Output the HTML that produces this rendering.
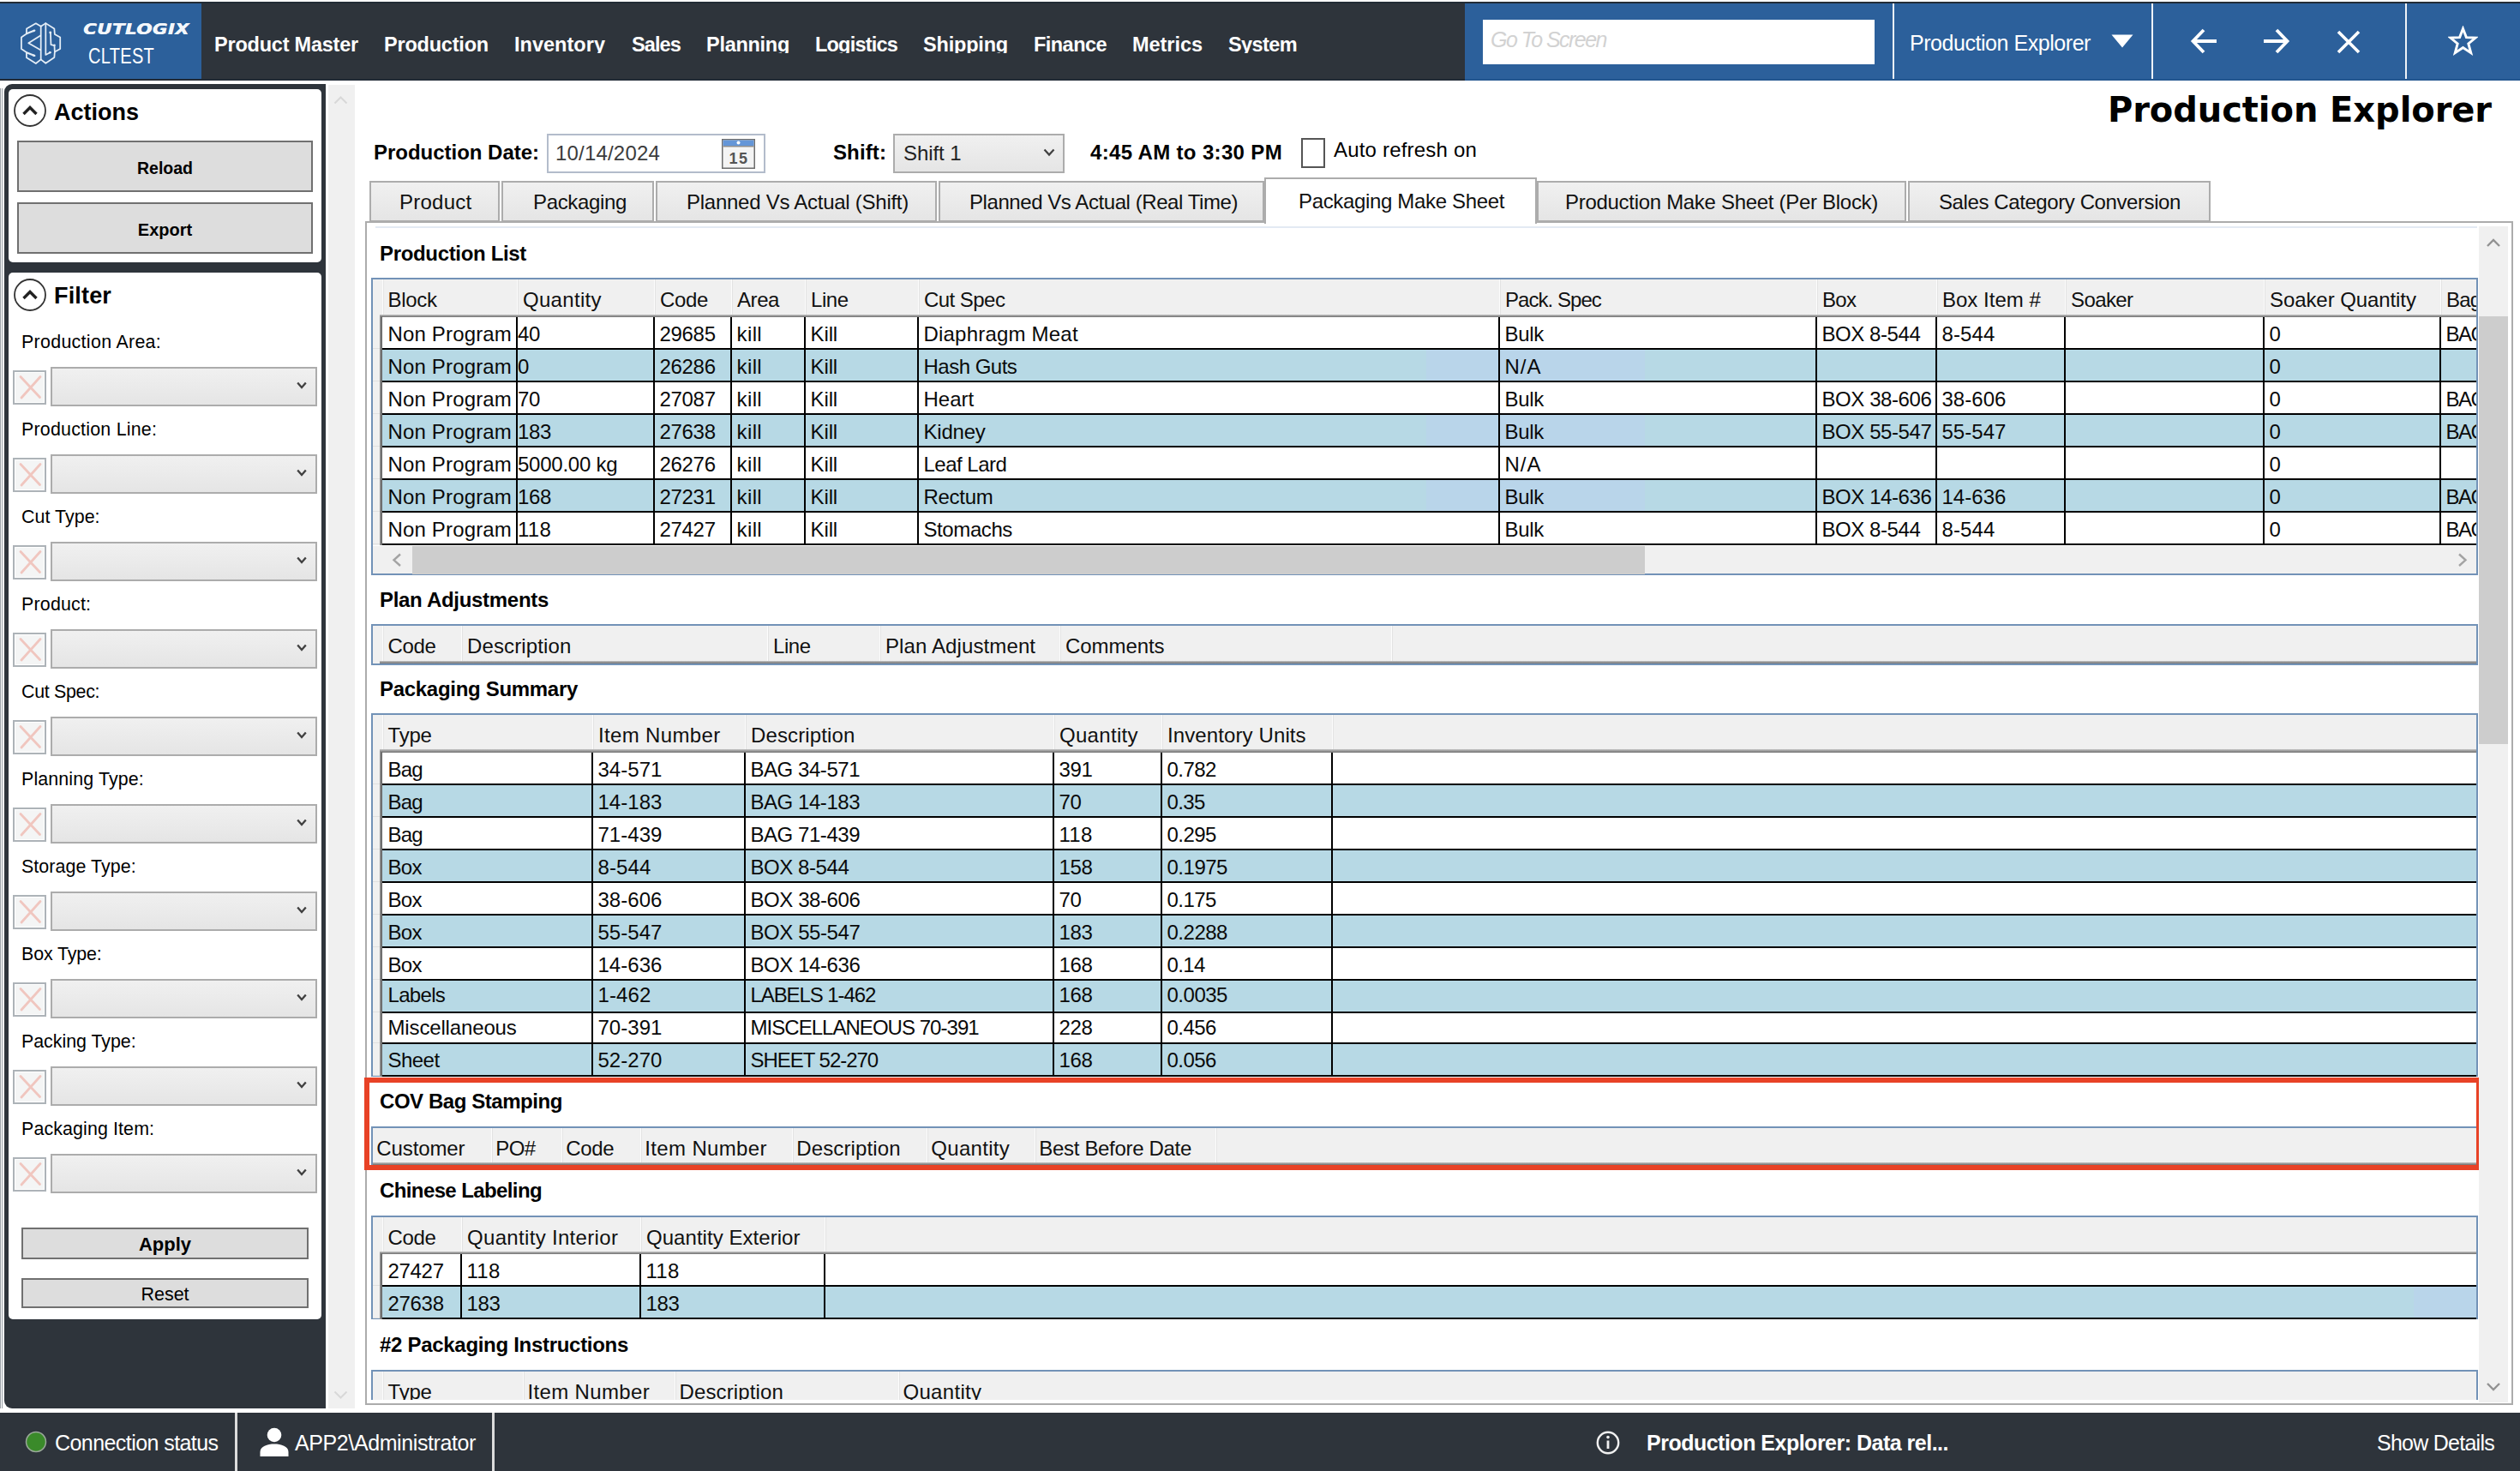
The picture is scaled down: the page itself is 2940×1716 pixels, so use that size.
<!DOCTYPE html>
<html lang="en"><head><meta charset="utf-8"><title>Production Explorer</title>
<style>
html,body{margin:0;padding:0}
body{width:2940px;height:1716px;position:relative;overflow:hidden;background:#fff;font-family:'Liberation Sans',sans-serif;color:#000}
div,svg{position:absolute}
.t{white-space:nowrap}
</style></head>
<body>
<div style="left:0px;top:2px;width:2940px;height:92px;background:#2e343b;border-top:2px solid #232c36;box-sizing:border-box"></div>
<div style="left:0px;top:4px;width:235px;height:88px;background:#2c609b"></div>
<div style="left:1709px;top:4px;width:1231px;height:88px;background:#2c609b"></div>
<div style="left:0px;top:92px;width:2940px;height:2px;background:#222b36"></div>
<div style="left:1709px;top:92px;width:1231px;height:2px;background:#23568f"></div>
<svg style="left:10px;top:14px" width="80" height="72" viewBox="0 0 1634 1471" fill="none" stroke="#e4edf6" stroke-width="36" stroke-linejoin="round" stroke-linecap="round">
<path d="M650 272 L770 342 L885 268 L1090 400 L1100 530 L1230 602 L1230 880 L1100 952 L1090 1082 L885 1222 L770 1132 L650 1226 L430 1090 L425 960 L305 880 L305 602 L425 522 L430 400 Z"/>
<path d="M770 342 V1132 M885 268 V1020 L1000 962"/>
<path d="M760 562 L475 742 L760 902"/>
<path d="M440 512 L620 440 M440 968 L620 1042" stroke-width="44"/>
<path d="M1000 492 L1010 780 L1092 800 L1100 950"/>
<circle cx="600" cy="450" r="26" fill="#e4edf6" stroke="none"/><circle cx="600" cy="1036" r="26" fill="#e4edf6" stroke="none"/><circle cx="995" cy="492" r="30" fill="#e4edf6" stroke="none"/><circle cx="1092" cy="790" r="26" fill="#e4edf6" stroke="none"/><circle cx="985" cy="965" r="26" fill="#e4edf6" stroke="none"/>
</svg>
<div class="t" style="left:97px;top:23px;font-size:17px;line-height:23px;letter-spacing:0.300px;font-family:'DejaVu Sans','Liberation Sans',sans-serif;font-weight:700;font-style:italic;color:#f4f7fb;transform:scaleX(1.26);transform-origin:left;text-shadow:0.4px 0 0 #f4f7fb;">CUTLOGIX</div>
<div class="t" style="left:102.5px;top:50px;font-size:25px;line-height:31px;letter-spacing:0.400px;color:#fff;transform:scaleX(0.80);transform-origin:left;">CLTEST</div>
<div style="left:240px;top:30px;width:1300px;height:32px;overflow:hidden">
<div class="t" style="left:10px;top:8px;font-size:23.5px;line-height:29px;font-weight:700;color:#fff;letter-spacing:-0.219px">Product Master</div>
<div class="t" style="left:208px;top:8px;font-size:23.5px;line-height:29px;font-weight:700;color:#fff;letter-spacing:-0.202px">Production</div>
<div class="t" style="left:360px;top:8px;font-size:23.5px;line-height:29px;font-weight:700;color:#fff;letter-spacing:0.025px">Inventory</div>
<div class="t" style="left:497px;top:8px;font-size:23.5px;line-height:29px;font-weight:700;color:#fff;letter-spacing:-0.883px">Sales</div>
<div class="t" style="left:584px;top:8px;font-size:23.5px;line-height:29px;font-weight:700;color:#fff;letter-spacing:-0.278px">Planning</div>
<div class="t" style="left:711px;top:8px;font-size:23.5px;line-height:29px;font-weight:700;color:#fff;letter-spacing:-0.795px">Logistics</div>
<div class="t" style="left:837px;top:8px;font-size:23.5px;line-height:29px;font-weight:700;color:#fff;letter-spacing:-0.189px">Shipping</div>
<div class="t" style="left:966px;top:8px;font-size:23.5px;line-height:29px;font-weight:700;color:#fff;letter-spacing:-0.543px">Finance</div>
<div class="t" style="left:1081px;top:8px;font-size:23.5px;line-height:29px;font-weight:700;color:#fff;letter-spacing:-0.041px">Metrics</div>
<div class="t" style="left:1193px;top:8px;font-size:23.5px;line-height:29px;font-weight:700;color:#fff;letter-spacing:-0.601px">System</div>
</div>
<div style="left:1730px;top:23px;width:457px;height:52px;background:#fff"></div>
<div class="t" style="left:1739px;top:31px;font-size:25px;line-height:31px;letter-spacing:-1.528px;font-style:italic;color:#d2d2d2;">Go To Screen</div>
<div style="left:2208px;top:4px;width:2px;height:88px;background:#eef2f7"></div>
<div style="left:2510px;top:4px;width:2px;height:88px;background:#eef2f7"></div>
<div style="left:2806px;top:4px;width:2px;height:88px;background:#eef2f7"></div>
<div class="t" style="left:2228px;top:35px;font-size:25px;line-height:31px;letter-spacing:-0.451px;color:#fff;">Production Explorer</div>
<svg style="left:2463px;top:40px" width="26" height="16" viewBox="0 0 26 16"><path d="M0.5 0.5 L25.5 0.5 L13 15.5 Z" fill="#fff"/></svg>
<svg style="left:2555px;top:32px" width="34" height="32" viewBox="0 0 34 32" fill="none" stroke="#fff" stroke-width="3.8"><path d="M31 16 H4 M16 3 L3.5 16 L16 29"/></svg>
<svg style="left:2638px;top:32px" width="34" height="32" viewBox="0 0 34 32" fill="none" stroke="#fff" stroke-width="3.8"><path d="M3 16 H30 M18 3 L30.5 16 L18 29"/></svg>
<svg style="left:2725px;top:34px" width="30" height="30" viewBox="0 0 30 30" fill="none" stroke="#fff" stroke-width="3.6"><path d="M3 3 L27 27 M27 3 L3 27"/></svg>
<svg style="left:2855.5px;top:30px" width="35" height="35" viewBox="0 0 36 36" fill="none" stroke="#fff" stroke-width="3" stroke-linejoin="miter"><path d="M18 3.5 L22 14 L33 14.5 L24.5 21.5 L27.5 32.5 L18 26.2 L8.5 32.5 L11.5 21.5 L3 14.5 L14 14 Z"/></svg>
<div style="left:0px;top:103px;width:1px;height:1540px;background:#9aa0a6"></div>
<div style="left:2px;top:103px;width:1px;height:1540px;background:#9aa0a6"></div>
<div style="left:5px;top:98px;width:375px;height:1545px;background:#2e343b;border-radius:9px 0 0 9px"></div>
<div style="left:10px;top:104px;width:365px;height:202px;background:#fff;border-radius:5px"></div>
<div style="left:10px;top:318px;width:365px;height:1221px;background:#fff;border-radius:5px"></div>
<svg style="left:15.299999999999997px;top:109px" width="40" height="40" viewBox="0 0 40 40" fill="none"><circle cx="20" cy="20" r="18" stroke="#333" stroke-width="1.8"/><path d="M12.5 24 L20 16.5 L27.5 24" stroke="#222" stroke-width="3.4"/></svg>
<svg style="left:15.299999999999997px;top:323.5px" width="40" height="40" viewBox="0 0 40 40" fill="none"><circle cx="20" cy="20" r="18" stroke="#333" stroke-width="1.8"/><path d="M12.5 24 L20 16.5 L27.5 24" stroke="#222" stroke-width="3.4"/></svg>
<div class="t" style="left:63px;top:115px;font-size:27px;line-height:33px;font-weight:700;">Actions</div>
<div class="t" style="left:63px;top:329px;font-size:27px;line-height:33px;letter-spacing:0.165px;font-weight:700;">Filter</div>
<div style="left:20px;top:164px;width:345px;height:60px;background:#ddd;border:2px solid #707070;box-sizing:border-box"></div>
<div style="left:20px;top:236px;width:345px;height:60px;background:#ddd;border:2px solid #707070;box-sizing:border-box"></div>
<div class="t" style="left:-307.5px;width:1000px;text-align:center;top:184px;font-size:19.5px;line-height:25px;font-weight:700;">Reload</div>
<div class="t" style="left:-307.5px;width:1000px;text-align:center;top:255px;font-size:20px;line-height:26px;font-weight:700;">Export</div>
<div class="t" style="left:25px;top:386px;font-size:21.4px;line-height:27px;letter-spacing:0.307px;">Production Area:</div>
<div style="left:15px;top:432px;width:39px;height:40px;background:#f4f5f5;border:2px solid #adb3b8;box-sizing:border-box;box-shadow:inset 0 0 0 1px #fff"></div>
<svg style="left:15px;top:432px" width="39" height="40" viewBox="0 0 39 40" fill="none" stroke="#f0c6bf" stroke-width="2.8" stroke-linecap="round"><path d="M9 7.5 L31.5 31.5 M32 7.5 L10 32"/></svg>
<div style="left:59px;top:428px;width:311px;height:46px;background:linear-gradient(#f0f0f0,#e5e5e5);border:2px solid #acacac;box-sizing:border-box"></div>
<svg style="left:344px;top:444px" width="16" height="12" viewBox="0 0 16 12" fill="none" stroke="#404040" stroke-width="2.3"><path d="M3.2 2.5 L8 8 L12.8 2.5"/></svg>
<div class="t" style="left:25px;top:488px;font-size:21.4px;line-height:27px;letter-spacing:0.220px;">Production Line:</div>
<div style="left:15px;top:534px;width:39px;height:40px;background:#f4f5f5;border:2px solid #adb3b8;box-sizing:border-box;box-shadow:inset 0 0 0 1px #fff"></div>
<svg style="left:15px;top:534px" width="39" height="40" viewBox="0 0 39 40" fill="none" stroke="#f0c6bf" stroke-width="2.8" stroke-linecap="round"><path d="M9 7.5 L31.5 31.5 M32 7.5 L10 32"/></svg>
<div style="left:59px;top:530px;width:311px;height:46px;background:linear-gradient(#f0f0f0,#e5e5e5);border:2px solid #acacac;box-sizing:border-box"></div>
<svg style="left:344px;top:546px" width="16" height="12" viewBox="0 0 16 12" fill="none" stroke="#404040" stroke-width="2.3"><path d="M3.2 2.5 L8 8 L12.8 2.5"/></svg>
<div class="t" style="left:25px;top:590px;font-size:21.4px;line-height:27px;letter-spacing:0.044px;">Cut Type:</div>
<div style="left:15px;top:636px;width:39px;height:40px;background:#f4f5f5;border:2px solid #adb3b8;box-sizing:border-box;box-shadow:inset 0 0 0 1px #fff"></div>
<svg style="left:15px;top:636px" width="39" height="40" viewBox="0 0 39 40" fill="none" stroke="#f0c6bf" stroke-width="2.8" stroke-linecap="round"><path d="M9 7.5 L31.5 31.5 M32 7.5 L10 32"/></svg>
<div style="left:59px;top:632px;width:311px;height:46px;background:linear-gradient(#f0f0f0,#e5e5e5);border:2px solid #acacac;box-sizing:border-box"></div>
<svg style="left:344px;top:648px" width="16" height="12" viewBox="0 0 16 12" fill="none" stroke="#404040" stroke-width="2.3"><path d="M3.2 2.5 L8 8 L12.8 2.5"/></svg>
<div class="t" style="left:25px;top:692px;font-size:21.4px;line-height:27px;letter-spacing:0.196px;">Product:</div>
<div style="left:15px;top:738px;width:39px;height:40px;background:#f4f5f5;border:2px solid #adb3b8;box-sizing:border-box;box-shadow:inset 0 0 0 1px #fff"></div>
<svg style="left:15px;top:738px" width="39" height="40" viewBox="0 0 39 40" fill="none" stroke="#f0c6bf" stroke-width="2.8" stroke-linecap="round"><path d="M9 7.5 L31.5 31.5 M32 7.5 L10 32"/></svg>
<div style="left:59px;top:734px;width:311px;height:46px;background:linear-gradient(#f0f0f0,#e5e5e5);border:2px solid #acacac;box-sizing:border-box"></div>
<svg style="left:344px;top:750px" width="16" height="12" viewBox="0 0 16 12" fill="none" stroke="#404040" stroke-width="2.3"><path d="M3.2 2.5 L8 8 L12.8 2.5"/></svg>
<div class="t" style="left:25px;top:794px;font-size:21.4px;line-height:27px;letter-spacing:-0.296px;">Cut Spec:</div>
<div style="left:15px;top:840px;width:39px;height:40px;background:#f4f5f5;border:2px solid #adb3b8;box-sizing:border-box;box-shadow:inset 0 0 0 1px #fff"></div>
<svg style="left:15px;top:840px" width="39" height="40" viewBox="0 0 39 40" fill="none" stroke="#f0c6bf" stroke-width="2.8" stroke-linecap="round"><path d="M9 7.5 L31.5 31.5 M32 7.5 L10 32"/></svg>
<div style="left:59px;top:836px;width:311px;height:46px;background:linear-gradient(#f0f0f0,#e5e5e5);border:2px solid #acacac;box-sizing:border-box"></div>
<svg style="left:344px;top:852px" width="16" height="12" viewBox="0 0 16 12" fill="none" stroke="#404040" stroke-width="2.3"><path d="M3.2 2.5 L8 8 L12.8 2.5"/></svg>
<div class="t" style="left:25px;top:896px;font-size:21.4px;line-height:27px;letter-spacing:0.121px;">Planning Type:</div>
<div style="left:15px;top:942px;width:39px;height:40px;background:#f4f5f5;border:2px solid #adb3b8;box-sizing:border-box;box-shadow:inset 0 0 0 1px #fff"></div>
<svg style="left:15px;top:942px" width="39" height="40" viewBox="0 0 39 40" fill="none" stroke="#f0c6bf" stroke-width="2.8" stroke-linecap="round"><path d="M9 7.5 L31.5 31.5 M32 7.5 L10 32"/></svg>
<div style="left:59px;top:938px;width:311px;height:46px;background:linear-gradient(#f0f0f0,#e5e5e5);border:2px solid #acacac;box-sizing:border-box"></div>
<svg style="left:344px;top:954px" width="16" height="12" viewBox="0 0 16 12" fill="none" stroke="#404040" stroke-width="2.3"><path d="M3.2 2.5 L8 8 L12.8 2.5"/></svg>
<div class="t" style="left:25px;top:998px;font-size:21.4px;line-height:27px;letter-spacing:0.068px;">Storage Type:</div>
<div style="left:15px;top:1044px;width:39px;height:40px;background:#f4f5f5;border:2px solid #adb3b8;box-sizing:border-box;box-shadow:inset 0 0 0 1px #fff"></div>
<svg style="left:15px;top:1044px" width="39" height="40" viewBox="0 0 39 40" fill="none" stroke="#f0c6bf" stroke-width="2.8" stroke-linecap="round"><path d="M9 7.5 L31.5 31.5 M32 7.5 L10 32"/></svg>
<div style="left:59px;top:1040px;width:311px;height:46px;background:linear-gradient(#f0f0f0,#e5e5e5);border:2px solid #acacac;box-sizing:border-box"></div>
<svg style="left:344px;top:1056px" width="16" height="12" viewBox="0 0 16 12" fill="none" stroke="#404040" stroke-width="2.3"><path d="M3.2 2.5 L8 8 L12.8 2.5"/></svg>
<div class="t" style="left:25px;top:1100px;font-size:21.4px;line-height:27px;letter-spacing:-0.117px;">Box Type:</div>
<div style="left:15px;top:1146px;width:39px;height:40px;background:#f4f5f5;border:2px solid #adb3b8;box-sizing:border-box;box-shadow:inset 0 0 0 1px #fff"></div>
<svg style="left:15px;top:1146px" width="39" height="40" viewBox="0 0 39 40" fill="none" stroke="#f0c6bf" stroke-width="2.8" stroke-linecap="round"><path d="M9 7.5 L31.5 31.5 M32 7.5 L10 32"/></svg>
<div style="left:59px;top:1142px;width:311px;height:46px;background:linear-gradient(#f0f0f0,#e5e5e5);border:2px solid #acacac;box-sizing:border-box"></div>
<svg style="left:344px;top:1158px" width="16" height="12" viewBox="0 0 16 12" fill="none" stroke="#404040" stroke-width="2.3"><path d="M3.2 2.5 L8 8 L12.8 2.5"/></svg>
<div class="t" style="left:25px;top:1202px;font-size:21.4px;line-height:27px;letter-spacing:-0.024px;">Packing Type:</div>
<div style="left:15px;top:1248px;width:39px;height:40px;background:#f4f5f5;border:2px solid #adb3b8;box-sizing:border-box;box-shadow:inset 0 0 0 1px #fff"></div>
<svg style="left:15px;top:1248px" width="39" height="40" viewBox="0 0 39 40" fill="none" stroke="#f0c6bf" stroke-width="2.8" stroke-linecap="round"><path d="M9 7.5 L31.5 31.5 M32 7.5 L10 32"/></svg>
<div style="left:59px;top:1244px;width:311px;height:46px;background:linear-gradient(#f0f0f0,#e5e5e5);border:2px solid #acacac;box-sizing:border-box"></div>
<svg style="left:344px;top:1260px" width="16" height="12" viewBox="0 0 16 12" fill="none" stroke="#404040" stroke-width="2.3"><path d="M3.2 2.5 L8 8 L12.8 2.5"/></svg>
<div class="t" style="left:25px;top:1304px;font-size:21.4px;line-height:27px;letter-spacing:0.116px;">Packaging Item:</div>
<div style="left:15px;top:1350px;width:39px;height:40px;background:#f4f5f5;border:2px solid #adb3b8;box-sizing:border-box;box-shadow:inset 0 0 0 1px #fff"></div>
<svg style="left:15px;top:1350px" width="39" height="40" viewBox="0 0 39 40" fill="none" stroke="#f0c6bf" stroke-width="2.8" stroke-linecap="round"><path d="M9 7.5 L31.5 31.5 M32 7.5 L10 32"/></svg>
<div style="left:59px;top:1346px;width:311px;height:46px;background:linear-gradient(#f0f0f0,#e5e5e5);border:2px solid #acacac;box-sizing:border-box"></div>
<svg style="left:344px;top:1362px" width="16" height="12" viewBox="0 0 16 12" fill="none" stroke="#404040" stroke-width="2.3"><path d="M3.2 2.5 L8 8 L12.8 2.5"/></svg>
<div style="left:25px;top:1432px;width:335px;height:37px;background:#ddd;border:2px solid #707070;box-sizing:border-box"></div>
<div style="left:25px;top:1491px;width:335px;height:35px;background:#ddd;border:2px solid #707070;box-sizing:border-box"></div>
<div class="t" style="left:-307.5px;width:1000px;text-align:center;top:1438px;font-size:22px;line-height:28px;font-weight:700;">Apply</div>
<div class="t" style="left:-307.5px;width:1000px;text-align:center;top:1497px;font-size:21.5px;line-height:27px;">Reset</div>
<div style="left:383px;top:99px;width:31px;height:1544px;background:#f0f0f0"></div>
<svg style="left:389px;top:111px" width="17" height="11" viewBox="0 0 17 11" fill="none" stroke="#d8d8d8" stroke-width="2"><path d="M1.5 9.5 L8.5 2.5 L15.5 9.5"/></svg>
<svg style="left:389px;top:1622px" width="17" height="11" viewBox="0 0 17 11" fill="none" stroke="#d8d8d8" stroke-width="2"><path d="M1.5 1.5 L8.5 8.5 L15.5 1.5"/></svg>
<div class="t" style="left:2459px;top:105px;font-size:40px;line-height:46px;letter-spacing:-0.085px;font-family:'DejaVu Sans','Liberation Sans',sans-serif;font-weight:700;">Production Explorer</div>
<div class="t" style="left:436px;top:163px;font-size:24px;line-height:30px;letter-spacing:-0.021px;font-weight:700;">Production Date:</div>
<div style="left:638px;top:156px;width:255px;height:46px;background:#fff;border:2px solid #b3bccb;box-sizing:border-box"></div>
<div class="t" style="left:648px;top:164px;font-size:24px;line-height:30px;letter-spacing:0.188px;color:#3c3c3c;">10/14/2024</div>
<svg style="left:842px;top:162px" width="39" height="35" viewBox="0 0 39 35"><rect x="0.75" y="0.75" width="37.5" height="33.5" fill="#f4f4f4" stroke="#6d6d6d" stroke-width="1.5"/><rect x="1.5" y="1.5" width="36" height="6.5" fill="#6496d8"/><circle cx="19.5" cy="4.5" r="2" fill="#fff"/><rect x="1.5" y="8" width="36" height="1.5" fill="#8f8f8f"/><text x="20" y="29" text-anchor="middle" font-family="Liberation Sans, sans-serif" font-weight="700" font-size="18" fill="#555" letter-spacing="1.5">15</text></svg>
<div class="t" style="left:972px;top:163px;font-size:24px;line-height:30px;letter-spacing:0.114px;font-weight:700;">Shift:</div>
<div style="left:1042px;top:156px;width:200px;height:46px;background:linear-gradient(#f0f0f0,#e5e5e5);border:2px solid #acacac;box-sizing:border-box"></div>
<div class="t" style="left:1054px;top:164px;font-size:24px;line-height:30px;letter-spacing:-0.077px;color:#222;">Shift 1</div>
<svg style="left:1216px;top:172px" width="16" height="12" viewBox="0 0 16 12" fill="none" stroke="#404040" stroke-width="2.2"><path d="M2.5 2.5 L8 8.5 L13.5 2.5"/></svg>
<div class="t" style="left:1272px;top:163px;font-size:24px;line-height:30px;letter-spacing:0.342px;font-weight:700;">4:45 AM to 3:30 PM</div>
<div style="left:1518px;top:161px;width:28px;height:35px;background:#fff;border:2px solid #555;box-sizing:border-box"></div>
<div class="t" style="left:1556px;top:160px;font-size:24px;line-height:30px;letter-spacing:0.193px;">Auto refresh on</div>
<div style="left:426px;top:258px;width:2505.5px;height:1381px;background:#fff;border:2px solid #acacac;box-sizing:border-box"></div>
<div style="left:431px;top:211px;width:152px;height:48px;background:linear-gradient(#f0f0f0,#e5e5e5);border:2px solid #acacac;box-sizing:border-box"></div>
<div style="left:585px;top:211px;width:178px;height:48px;background:linear-gradient(#f0f0f0,#e5e5e5);border:2px solid #acacac;box-sizing:border-box"></div>
<div style="left:765px;top:211px;width:328px;height:48px;background:linear-gradient(#f0f0f0,#e5e5e5);border:2px solid #acacac;box-sizing:border-box"></div>
<div style="left:1095px;top:211px;width:380px;height:48px;background:linear-gradient(#f0f0f0,#e5e5e5);border:2px solid #acacac;box-sizing:border-box"></div>
<div style="left:1475px;top:207px;width:318px;height:54px;background:#fff;border:2px solid #acacac;border-bottom:none;box-sizing:border-box"></div>
<div style="left:1793px;top:211px;width:431px;height:48px;background:linear-gradient(#f0f0f0,#e5e5e5);border:2px solid #acacac;box-sizing:border-box"></div>
<div style="left:2226px;top:211px;width:353px;height:48px;background:linear-gradient(#f0f0f0,#e5e5e5);border:2px solid #acacac;box-sizing:border-box"></div>
<div class="t" style="left:466px;top:221px;font-size:24px;line-height:30px;letter-spacing:0.255px;color:#111;">Product</div>
<div class="t" style="left:622px;top:221px;font-size:24px;line-height:30px;letter-spacing:-0.342px;color:#111;">Packaging</div>
<div class="t" style="left:801px;top:221px;font-size:24px;line-height:30px;letter-spacing:-0.259px;color:#111;">Planned Vs Actual (Shift)</div>
<div class="t" style="left:1131px;top:221px;font-size:24px;line-height:30px;letter-spacing:-0.431px;color:#111;">Planned Vs Actual (Real Time)</div>
<div class="t" style="left:1515px;top:220px;font-size:24px;line-height:30px;letter-spacing:-0.341px;color:#111;">Packaging Make Sheet</div>
<div class="t" style="left:1826px;top:221px;font-size:24px;line-height:30px;letter-spacing:-0.298px;color:#111;">Production Make Sheet (Per Block)</div>
<div class="t" style="left:2262px;top:221px;font-size:24px;line-height:30px;letter-spacing:-0.406px;color:#111;">Sales Category Conversion</div>
<div style="left:438px;top:264px;width:2452px;height:2px;background:#e3eaf3"></div>
<div class="t" style="left:443px;top:281px;font-size:24px;line-height:30px;letter-spacing:-0.333px;font-weight:700;">Production List</div>
<div style="left:433px;top:324px;width:2458px;height:347px;overflow:hidden">
<div style="left:0px;top:0px;width:2458px;height:347px;border:2px solid #7292b7;box-sizing:border-box;background:#f0f0f0"></div>
<div style="left:13px;top:2px;width:1px;height:41px;background:#fbfbfb"></div>
<div style="left:14px;top:2px;width:1px;height:41px;background:#e6e6e6"></div>
<div style="left:170px;top:2px;width:1px;height:41px;background:#fcfcfc"></div>
<div style="left:171px;top:2px;width:1px;height:41px;background:#e3e3e3"></div>
<div style="left:330px;top:2px;width:1px;height:41px;background:#fcfcfc"></div>
<div style="left:331px;top:2px;width:1px;height:41px;background:#e3e3e3"></div>
<div style="left:420px;top:2px;width:1px;height:41px;background:#fcfcfc"></div>
<div style="left:421px;top:2px;width:1px;height:41px;background:#e3e3e3"></div>
<div style="left:506px;top:2px;width:1px;height:41px;background:#fcfcfc"></div>
<div style="left:507px;top:2px;width:1px;height:41px;background:#e3e3e3"></div>
<div style="left:638px;top:2px;width:1px;height:41px;background:#fcfcfc"></div>
<div style="left:639px;top:2px;width:1px;height:41px;background:#e3e3e3"></div>
<div style="left:1316px;top:2px;width:1px;height:41px;background:#fcfcfc"></div>
<div style="left:1317px;top:2px;width:1px;height:41px;background:#e3e3e3"></div>
<div style="left:1686px;top:2px;width:1px;height:41px;background:#fcfcfc"></div>
<div style="left:1687px;top:2px;width:1px;height:41px;background:#e3e3e3"></div>
<div style="left:1826px;top:2px;width:1px;height:41px;background:#fcfcfc"></div>
<div style="left:1827px;top:2px;width:1px;height:41px;background:#e3e3e3"></div>
<div style="left:1976px;top:2px;width:1px;height:41px;background:#fcfcfc"></div>
<div style="left:1977px;top:2px;width:1px;height:41px;background:#e3e3e3"></div>
<div style="left:2208px;top:2px;width:1px;height:41px;background:#fcfcfc"></div>
<div style="left:2209px;top:2px;width:1px;height:41px;background:#e3e3e3"></div>
<div style="left:2414px;top:2px;width:1px;height:41px;background:#fcfcfc"></div>
<div style="left:2415px;top:2px;width:1px;height:41px;background:#e3e3e3"></div>
<div style="left:10px;top:43px;width:2446px;height:3px;background:linear-gradient(#c4c4c4,#6e6e6e)"></div>
<div style="left:13px;top:46px;width:2443px;height:36px;background:#fff"></div>
<div style="left:13px;top:82px;width:2443px;height:2px;background:#000"></div>
<div style="left:2px;top:82px;width:8px;height:1px;background:#e0e0e0"></div>
<div style="left:13px;top:84px;width:2443px;height:36px;background:#b7d9e5"></div>
<div style="left:1231px;top:84px;width:255px;height:36px;background:#b9d5ea"></div>
<div style="left:13px;top:120px;width:2443px;height:2px;background:#000"></div>
<div style="left:2px;top:120px;width:8px;height:1px;background:#e0e0e0"></div>
<div style="left:13px;top:122px;width:2443px;height:36px;background:#fff"></div>
<div style="left:13px;top:158px;width:2443px;height:2px;background:#000"></div>
<div style="left:2px;top:158px;width:8px;height:1px;background:#e0e0e0"></div>
<div style="left:13px;top:160px;width:2443px;height:36px;background:#b7d9e5"></div>
<div style="left:1231px;top:160px;width:255px;height:36px;background:#b9d5ea"></div>
<div style="left:13px;top:196px;width:2443px;height:2px;background:#000"></div>
<div style="left:2px;top:196px;width:8px;height:1px;background:#e0e0e0"></div>
<div style="left:13px;top:198px;width:2443px;height:36px;background:#fff"></div>
<div style="left:13px;top:234px;width:2443px;height:2px;background:#000"></div>
<div style="left:2px;top:234px;width:8px;height:1px;background:#e0e0e0"></div>
<div style="left:13px;top:236px;width:2443px;height:36px;background:#b7d9e5"></div>
<div style="left:1231px;top:236px;width:255px;height:36px;background:#b9d5ea"></div>
<div style="left:13px;top:272px;width:2443px;height:2px;background:#000"></div>
<div style="left:2px;top:272px;width:8px;height:1px;background:#e0e0e0"></div>
<div style="left:13px;top:274px;width:2443px;height:36px;background:#fff"></div>
<div style="left:13px;top:310px;width:2443px;height:2px;background:#000"></div>
<div style="left:2px;top:310px;width:8px;height:1px;background:#e0e0e0"></div>
<div style="left:10px;top:45px;width:3px;height:267px;background:linear-gradient(90deg,#9a9a9a,#5a5a5a)"></div>
<div style="left:169px;top:46px;width:2px;height:266px;background:#000"></div>
<div style="left:329px;top:46px;width:2px;height:266px;background:#000"></div>
<div style="left:419px;top:46px;width:2px;height:266px;background:#000"></div>
<div style="left:505px;top:46px;width:2px;height:266px;background:#000"></div>
<div style="left:637px;top:46px;width:2px;height:266px;background:#000"></div>
<div style="left:1315px;top:46px;width:2px;height:266px;background:#000"></div>
<div style="left:1685px;top:46px;width:2px;height:266px;background:#000"></div>
<div style="left:1825px;top:46px;width:2px;height:266px;background:#000"></div>
<div style="left:1975px;top:46px;width:2px;height:266px;background:#000"></div>
<div style="left:2207px;top:46px;width:2px;height:266px;background:#000"></div>
<div style="left:2413px;top:46px;width:2px;height:266px;background:#000"></div>
<div style="left:2px;top:312px;width:2454px;height:33px;background:#f0f0f0;border-top:1.5px solid #fdfdfd;box-sizing:border-box"></div>
</div>
<div style="left:433px;top:324px;width:2456px;height:347px;overflow:hidden">
<div class="t" style="left:19.5px;top:11px;font-size:24px;line-height:30px;letter-spacing:-0.313px;color:#111;">Block</div>
<div class="t" style="left:177px;top:11px;font-size:24px;line-height:30px;letter-spacing:0.302px;color:#111;">Quantity</div>
<div class="t" style="left:337px;top:11px;font-size:24px;line-height:30px;letter-spacing:-0.332px;color:#111;">Code</div>
<div class="t" style="left:427px;top:11px;font-size:24px;line-height:30px;letter-spacing:-0.434px;color:#111;">Area</div>
<div class="t" style="left:513px;top:11px;font-size:24px;line-height:30px;letter-spacing:-0.453px;color:#111;">Line</div>
<div class="t" style="left:645px;top:11px;font-size:24px;line-height:30px;letter-spacing:-0.545px;color:#111;">Cut Spec</div>
<div class="t" style="left:1323px;top:11px;font-size:24px;line-height:30px;letter-spacing:-0.958px;color:#111;">Pack. Spec</div>
<div class="t" style="left:1693px;top:11px;font-size:24px;line-height:30px;letter-spacing:-0.729px;color:#111;">Box</div>
<div class="t" style="left:1833px;top:11px;font-size:24px;line-height:30px;letter-spacing:0.009px;color:#111;">Box Item #</div>
<div class="t" style="left:1983px;top:11px;font-size:24px;line-height:30px;letter-spacing:-0.604px;color:#111;">Soaker</div>
<div class="t" style="left:2215px;top:11px;font-size:24px;line-height:30px;letter-spacing:-0.083px;color:#111;">Soaker Quantity</div>
<div class="t" style="left:2421px;top:11px;font-size:24px;line-height:30px;letter-spacing:-0.769px;color:#111;">Bag</div>
<div class="t" style="left:19.5px;top:51px;font-size:24px;line-height:30px;letter-spacing:0.158px;color:#0a0a0a;">Non Program</div>
<div class="t" style="left:171px;top:51px;font-size:24px;line-height:30px;letter-spacing:-0.307px;color:#0a0a0a;">40</div>
<div class="t" style="left:336.5px;top:51px;font-size:24px;line-height:30px;letter-spacing:-0.307px;color:#0a0a0a;">29685</div>
<div class="t" style="left:426.5px;top:51px;font-size:24px;line-height:30px;letter-spacing:0.401px;color:#0a0a0a;">kill</div>
<div class="t" style="left:512.5px;top:51px;font-size:24px;line-height:30px;letter-spacing:-0.099px;color:#0a0a0a;">Kill</div>
<div class="t" style="left:644.5px;top:51px;font-size:24px;line-height:30px;letter-spacing:0.204px;color:#0a0a0a;">Diaphragm Meat</div>
<div class="t" style="left:1322.5px;top:51px;font-size:24px;line-height:30px;letter-spacing:-0.318px;color:#0a0a0a;">Bulk</div>
<div class="t" style="left:1692.5px;top:51px;font-size:24px;line-height:30px;letter-spacing:-0.436px;color:#0a0a0a;">BOX 8-544</div>
<div class="t" style="left:1832.5px;top:51px;font-size:24px;line-height:30px;letter-spacing:0.091px;color:#0a0a0a;">8-544</div>
<div class="t" style="left:2214.5px;top:51px;font-size:24px;line-height:30px;color:#0a0a0a;">0</div>
<div class="t" style="left:2420.5px;top:51px;font-size:24px;line-height:30px;letter-spacing:-1.539px;color:#0a0a0a;">BAG</div>
<div class="t" style="left:19.5px;top:89px;font-size:24px;line-height:30px;letter-spacing:0.158px;color:#0a0a0a;">Non Program</div>
<div class="t" style="left:171px;top:89px;font-size:24px;line-height:30px;color:#0a0a0a;">0</div>
<div class="t" style="left:336.5px;top:89px;font-size:24px;line-height:30px;letter-spacing:-0.307px;color:#0a0a0a;">26286</div>
<div class="t" style="left:426.5px;top:89px;font-size:24px;line-height:30px;letter-spacing:0.401px;color:#0a0a0a;">kill</div>
<div class="t" style="left:512.5px;top:89px;font-size:24px;line-height:30px;letter-spacing:-0.099px;color:#0a0a0a;">Kill</div>
<div class="t" style="left:644.5px;top:89px;font-size:24px;line-height:30px;letter-spacing:-0.512px;color:#0a0a0a;">Hash Guts</div>
<div class="t" style="left:1322.5px;top:89px;font-size:24px;line-height:30px;letter-spacing:1.040px;color:#0a0a0a;">N/A</div>
<div class="t" style="left:2214.5px;top:89px;font-size:24px;line-height:30px;color:#0a0a0a;">0</div>
<div class="t" style="left:19.5px;top:127px;font-size:24px;line-height:30px;letter-spacing:0.158px;color:#0a0a0a;">Non Program</div>
<div class="t" style="left:171px;top:127px;font-size:24px;line-height:30px;letter-spacing:-0.307px;color:#0a0a0a;">70</div>
<div class="t" style="left:336.5px;top:127px;font-size:24px;line-height:30px;letter-spacing:-0.307px;color:#0a0a0a;">27087</div>
<div class="t" style="left:426.5px;top:127px;font-size:24px;line-height:30px;letter-spacing:0.401px;color:#0a0a0a;">kill</div>
<div class="t" style="left:512.5px;top:127px;font-size:24px;line-height:30px;letter-spacing:-0.099px;color:#0a0a0a;">Kill</div>
<div class="t" style="left:644.5px;top:127px;font-size:24px;line-height:30px;letter-spacing:0.008px;color:#0a0a0a;">Heart</div>
<div class="t" style="left:1322.5px;top:127px;font-size:24px;line-height:30px;letter-spacing:-0.318px;color:#0a0a0a;">Bulk</div>
<div class="t" style="left:1692.5px;top:127px;font-size:24px;line-height:30px;letter-spacing:-0.423px;color:#0a0a0a;">BOX 38-606</div>
<div class="t" style="left:1832.5px;top:127px;font-size:24px;line-height:30px;letter-spacing:0.024px;color:#0a0a0a;">38-606</div>
<div class="t" style="left:2214.5px;top:127px;font-size:24px;line-height:30px;color:#0a0a0a;">0</div>
<div class="t" style="left:2420.5px;top:127px;font-size:24px;line-height:30px;letter-spacing:-1.539px;color:#0a0a0a;">BAG</div>
<div class="t" style="left:19.5px;top:165px;font-size:24px;line-height:30px;letter-spacing:0.158px;color:#0a0a0a;">Non Program</div>
<div class="t" style="left:171px;top:165px;font-size:24px;line-height:30px;letter-spacing:-0.307px;color:#0a0a0a;">183</div>
<div class="t" style="left:336.5px;top:165px;font-size:24px;line-height:30px;letter-spacing:-0.307px;color:#0a0a0a;">27638</div>
<div class="t" style="left:426.5px;top:165px;font-size:24px;line-height:30px;letter-spacing:0.401px;color:#0a0a0a;">kill</div>
<div class="t" style="left:512.5px;top:165px;font-size:24px;line-height:30px;letter-spacing:-0.099px;color:#0a0a0a;">Kill</div>
<div class="t" style="left:644.5px;top:165px;font-size:24px;line-height:30px;letter-spacing:-0.216px;color:#0a0a0a;">Kidney</div>
<div class="t" style="left:1322.5px;top:165px;font-size:24px;line-height:30px;letter-spacing:-0.318px;color:#0a0a0a;">Bulk</div>
<div class="t" style="left:1692.5px;top:165px;font-size:24px;line-height:30px;letter-spacing:-0.423px;color:#0a0a0a;">BOX 55-547</div>
<div class="t" style="left:1832.5px;top:165px;font-size:24px;line-height:30px;letter-spacing:0.024px;color:#0a0a0a;">55-547</div>
<div class="t" style="left:2214.5px;top:165px;font-size:24px;line-height:30px;color:#0a0a0a;">0</div>
<div class="t" style="left:2420.5px;top:165px;font-size:24px;line-height:30px;letter-spacing:-1.539px;color:#0a0a0a;">BAG</div>
<div class="t" style="left:19.5px;top:203px;font-size:24px;line-height:30px;letter-spacing:0.158px;color:#0a0a0a;">Non Program</div>
<div class="t" style="left:171px;top:203px;font-size:24px;line-height:30px;letter-spacing:-0.241px;color:#0a0a0a;">5000.00 kg</div>
<div class="t" style="left:336.5px;top:203px;font-size:24px;line-height:30px;letter-spacing:-0.307px;color:#0a0a0a;">26276</div>
<div class="t" style="left:426.5px;top:203px;font-size:24px;line-height:30px;letter-spacing:0.401px;color:#0a0a0a;">kill</div>
<div class="t" style="left:512.5px;top:203px;font-size:24px;line-height:30px;letter-spacing:-0.099px;color:#0a0a0a;">Kill</div>
<div class="t" style="left:644.5px;top:203px;font-size:24px;line-height:30px;letter-spacing:-0.506px;color:#0a0a0a;">Leaf Lard</div>
<div class="t" style="left:1322.5px;top:203px;font-size:24px;line-height:30px;letter-spacing:1.040px;color:#0a0a0a;">N/A</div>
<div class="t" style="left:2214.5px;top:203px;font-size:24px;line-height:30px;color:#0a0a0a;">0</div>
<div class="t" style="left:19.5px;top:241px;font-size:24px;line-height:30px;letter-spacing:0.158px;color:#0a0a0a;">Non Program</div>
<div class="t" style="left:171px;top:241px;font-size:24px;line-height:30px;letter-spacing:-0.307px;color:#0a0a0a;">168</div>
<div class="t" style="left:336.5px;top:241px;font-size:24px;line-height:30px;letter-spacing:-0.307px;color:#0a0a0a;">27231</div>
<div class="t" style="left:426.5px;top:241px;font-size:24px;line-height:30px;letter-spacing:0.401px;color:#0a0a0a;">kill</div>
<div class="t" style="left:512.5px;top:241px;font-size:24px;line-height:30px;letter-spacing:-0.099px;color:#0a0a0a;">Kill</div>
<div class="t" style="left:644.5px;top:241px;font-size:24px;line-height:30px;letter-spacing:-0.288px;color:#0a0a0a;">Rectum</div>
<div class="t" style="left:1322.5px;top:241px;font-size:24px;line-height:30px;letter-spacing:-0.318px;color:#0a0a0a;">Bulk</div>
<div class="t" style="left:1692.5px;top:241px;font-size:24px;line-height:30px;letter-spacing:-0.423px;color:#0a0a0a;">BOX 14-636</div>
<div class="t" style="left:1832.5px;top:241px;font-size:24px;line-height:30px;letter-spacing:0.024px;color:#0a0a0a;">14-636</div>
<div class="t" style="left:2214.5px;top:241px;font-size:24px;line-height:30px;color:#0a0a0a;">0</div>
<div class="t" style="left:2420.5px;top:241px;font-size:24px;line-height:30px;letter-spacing:-1.539px;color:#0a0a0a;">BAG</div>
<div class="t" style="left:19.5px;top:279px;font-size:24px;line-height:30px;letter-spacing:0.158px;color:#0a0a0a;">Non Program</div>
<div class="t" style="left:171px;top:279px;font-size:24px;line-height:30px;letter-spacing:0.287px;color:#0a0a0a;">118</div>
<div class="t" style="left:336.5px;top:279px;font-size:24px;line-height:30px;letter-spacing:-0.307px;color:#0a0a0a;">27427</div>
<div class="t" style="left:426.5px;top:279px;font-size:24px;line-height:30px;letter-spacing:0.401px;color:#0a0a0a;">kill</div>
<div class="t" style="left:512.5px;top:279px;font-size:24px;line-height:30px;letter-spacing:-0.099px;color:#0a0a0a;">Kill</div>
<div class="t" style="left:644.5px;top:279px;font-size:24px;line-height:30px;letter-spacing:-0.407px;color:#0a0a0a;">Stomachs</div>
<div class="t" style="left:1322.5px;top:279px;font-size:24px;line-height:30px;letter-spacing:-0.318px;color:#0a0a0a;">Bulk</div>
<div class="t" style="left:1692.5px;top:279px;font-size:24px;line-height:30px;letter-spacing:-0.436px;color:#0a0a0a;">BOX 8-544</div>
<div class="t" style="left:1832.5px;top:279px;font-size:24px;line-height:30px;letter-spacing:0.091px;color:#0a0a0a;">8-544</div>
<div class="t" style="left:2214.5px;top:279px;font-size:24px;line-height:30px;color:#0a0a0a;">0</div>
<div class="t" style="left:2420.5px;top:279px;font-size:24px;line-height:30px;letter-spacing:-1.539px;color:#0a0a0a;">BAG</div>
</div>
<div style="left:480.5px;top:636.5px;width:1438.5px;height:33px;background:#cdcdcd"></div>
<svg style="left:456px;top:644px" width="13" height="18" viewBox="0 0 13 18" fill="none" stroke="#a3a3a3" stroke-width="2.4"><path d="M11 2.5 L3.5 9.3 L11 16"/></svg>
<svg style="left:2867px;top:644px" width="13" height="18" viewBox="0 0 13 18" fill="none" stroke="#a3a3a3" stroke-width="2.4"><path d="M2 2.5 L9.5 9.3 L2 16"/></svg>
<div class="t" style="left:443px;top:685px;font-size:24px;line-height:30px;letter-spacing:-0.301px;font-weight:700;">Plan Adjustments</div>
<div style="left:433px;top:728px;width:2458px;height:48px;overflow:hidden">
<div style="left:0px;top:0px;width:2458px;height:48px;border:2px solid #7292b7;box-sizing:border-box;background:#f0f0f0"></div>
<div style="left:13px;top:2px;width:1px;height:41px;background:#fbfbfb"></div>
<div style="left:14px;top:2px;width:1px;height:41px;background:#e6e6e6"></div>
<div style="left:105px;top:2px;width:1px;height:41px;background:#fcfcfc"></div>
<div style="left:106px;top:2px;width:1px;height:41px;background:#e3e3e3"></div>
<div style="left:462px;top:2px;width:1px;height:41px;background:#fcfcfc"></div>
<div style="left:463px;top:2px;width:1px;height:41px;background:#e3e3e3"></div>
<div style="left:593px;top:2px;width:1px;height:41px;background:#fcfcfc"></div>
<div style="left:594px;top:2px;width:1px;height:41px;background:#e3e3e3"></div>
<div style="left:803px;top:2px;width:1px;height:41px;background:#fcfcfc"></div>
<div style="left:804px;top:2px;width:1px;height:41px;background:#e3e3e3"></div>
<div style="left:1190px;top:2px;width:1px;height:41px;background:#fcfcfc"></div>
<div style="left:1191px;top:2px;width:1px;height:41px;background:#e3e3e3"></div>
<div style="left:10px;top:43px;width:2446px;height:3px;background:linear-gradient(#c4c4c4,#6e6e6e)"></div>
</div>
<div style="left:433px;top:728px;width:2456px;height:48px;overflow:hidden">
<div class="t" style="left:19.5px;top:11px;font-size:24px;line-height:30px;letter-spacing:-0.332px;color:#111;">Code</div>
<div class="t" style="left:112px;top:11px;font-size:24px;line-height:30px;letter-spacing:0.128px;color:#111;">Description</div>
<div class="t" style="left:469px;top:11px;font-size:24px;line-height:30px;letter-spacing:-0.453px;color:#111;">Line</div>
<div class="t" style="left:600px;top:11px;font-size:24px;line-height:30px;letter-spacing:0.113px;color:#111;">Plan Adjustment</div>
<div class="t" style="left:810px;top:11px;font-size:24px;line-height:30px;letter-spacing:-0.059px;color:#111;">Comments</div>
</div>
<div class="t" style="left:443px;top:789px;font-size:24px;line-height:30px;letter-spacing:-0.300px;font-weight:700;">Packaging Summary</div>
<div style="left:433px;top:832px;width:2458px;height:424px;overflow:hidden">
<div style="left:0px;top:0px;width:2458px;height:424px;border:2px solid #7292b7;box-sizing:border-box;background:#f0f0f0"></div>
<div style="left:13px;top:2px;width:1px;height:40px;background:#fbfbfb"></div>
<div style="left:14px;top:2px;width:1px;height:40px;background:#e6e6e6"></div>
<div style="left:258px;top:2px;width:1px;height:40px;background:#fcfcfc"></div>
<div style="left:259px;top:2px;width:1px;height:40px;background:#e3e3e3"></div>
<div style="left:436px;top:2px;width:1px;height:40px;background:#fcfcfc"></div>
<div style="left:437px;top:2px;width:1px;height:40px;background:#e3e3e3"></div>
<div style="left:796px;top:2px;width:1px;height:40px;background:#fcfcfc"></div>
<div style="left:797px;top:2px;width:1px;height:40px;background:#e3e3e3"></div>
<div style="left:922px;top:2px;width:1px;height:40px;background:#fcfcfc"></div>
<div style="left:923px;top:2px;width:1px;height:40px;background:#e3e3e3"></div>
<div style="left:1121px;top:2px;width:1px;height:40px;background:#fcfcfc"></div>
<div style="left:1122px;top:2px;width:1px;height:40px;background:#e3e3e3"></div>
<div style="left:10px;top:42px;width:2446px;height:4px;background:linear-gradient(#c4c4c4,#6e6e6e)"></div>
<div style="left:13px;top:46px;width:2443px;height:36px;background:#fff"></div>
<div style="left:13px;top:82px;width:2443px;height:2px;background:#000"></div>
<div style="left:2px;top:82px;width:8px;height:1px;background:#e0e0e0"></div>
<div style="left:13px;top:84px;width:2443px;height:36px;background:#b7d9e5"></div>
<div style="left:13px;top:120px;width:2443px;height:2px;background:#000"></div>
<div style="left:2px;top:120px;width:8px;height:1px;background:#e0e0e0"></div>
<div style="left:13px;top:122px;width:2443px;height:36px;background:#fff"></div>
<div style="left:13px;top:158px;width:2443px;height:2px;background:#000"></div>
<div style="left:2px;top:158px;width:8px;height:1px;background:#e0e0e0"></div>
<div style="left:13px;top:160px;width:2443px;height:36px;background:#b7d9e5"></div>
<div style="left:13px;top:196px;width:2443px;height:2px;background:#000"></div>
<div style="left:2px;top:196px;width:8px;height:1px;background:#e0e0e0"></div>
<div style="left:13px;top:198px;width:2443px;height:36px;background:#fff"></div>
<div style="left:13px;top:234px;width:2443px;height:2px;background:#000"></div>
<div style="left:2px;top:234px;width:8px;height:1px;background:#e0e0e0"></div>
<div style="left:13px;top:236px;width:2443px;height:36px;background:#b7d9e5"></div>
<div style="left:13px;top:272px;width:2443px;height:2px;background:#000"></div>
<div style="left:2px;top:272px;width:8px;height:1px;background:#e0e0e0"></div>
<div style="left:13px;top:274px;width:2443px;height:36px;background:#fff"></div>
<div style="left:13px;top:310px;width:2443px;height:2px;background:#000"></div>
<div style="left:2px;top:310px;width:8px;height:1px;background:#e0e0e0"></div>
<div style="left:13px;top:312px;width:2443px;height:36px;background:#b7d9e5"></div>
<div style="left:13px;top:348px;width:2443px;height:2px;background:#000"></div>
<div style="left:2px;top:348px;width:8px;height:1px;background:#e0e0e0"></div>
<div style="left:13px;top:350px;width:2443px;height:34px;background:#fff"></div>
<div style="left:13px;top:384px;width:2443px;height:2px;background:#000"></div>
<div style="left:2px;top:384px;width:8px;height:1px;background:#e0e0e0"></div>
<div style="left:13px;top:386px;width:2443px;height:36px;background:#b7d9e5"></div>
<div style="left:13px;top:422px;width:2443px;height:2px;background:#000"></div>
<div style="left:2px;top:422px;width:8px;height:1px;background:#e0e0e0"></div>
<div style="left:10px;top:45px;width:3px;height:379px;background:linear-gradient(90deg,#9a9a9a,#5a5a5a)"></div>
<div style="left:257px;top:46px;width:2px;height:378px;background:#000"></div>
<div style="left:435px;top:46px;width:2px;height:378px;background:#000"></div>
<div style="left:795px;top:46px;width:2px;height:378px;background:#000"></div>
<div style="left:921px;top:46px;width:2px;height:378px;background:#000"></div>
<div style="left:1120px;top:46px;width:2px;height:378px;background:#000"></div>
</div>
<div style="left:433px;top:832px;width:2456px;height:424px;overflow:hidden">
<div class="t" style="left:19.5px;top:11px;font-size:24px;line-height:30px;letter-spacing:-0.206px;color:#111;">Type</div>
<div class="t" style="left:265px;top:11px;font-size:24px;line-height:30px;letter-spacing:0.350px;color:#111;">Item Number</div>
<div class="t" style="left:443px;top:11px;font-size:24px;line-height:30px;letter-spacing:0.128px;color:#111;">Description</div>
<div class="t" style="left:803px;top:11px;font-size:24px;line-height:30px;letter-spacing:0.302px;color:#111;">Quantity</div>
<div class="t" style="left:929px;top:11px;font-size:24px;line-height:30px;letter-spacing:0.110px;color:#111;">Inventory Units</div>
<div class="t" style="left:19.5px;top:51px;font-size:24px;line-height:30px;letter-spacing:-0.769px;color:#0a0a0a;">Bag</div>
<div class="t" style="left:264.5px;top:51px;font-size:24px;line-height:30px;letter-spacing:0.024px;color:#0a0a0a;">34-571</div>
<div class="t" style="left:442.5px;top:51px;font-size:24px;line-height:30px;letter-spacing:-0.451px;color:#0a0a0a;">BAG 34-571</div>
<div class="t" style="left:802.5px;top:51px;font-size:24px;line-height:30px;letter-spacing:-0.307px;color:#0a0a0a;">391</div>
<div class="t" style="left:928.5px;top:51px;font-size:24px;line-height:30px;letter-spacing:-0.530px;color:#0a0a0a;">0.782</div>
<div class="t" style="left:19.5px;top:89px;font-size:24px;line-height:30px;letter-spacing:-0.769px;color:#0a0a0a;">Bag</div>
<div class="t" style="left:264.5px;top:89px;font-size:24px;line-height:30px;letter-spacing:0.024px;color:#0a0a0a;">14-183</div>
<div class="t" style="left:442.5px;top:89px;font-size:24px;line-height:30px;letter-spacing:-0.451px;color:#0a0a0a;">BAG 14-183</div>
<div class="t" style="left:802.5px;top:89px;font-size:24px;line-height:30px;letter-spacing:-0.307px;color:#0a0a0a;">70</div>
<div class="t" style="left:928.5px;top:89px;font-size:24px;line-height:30px;letter-spacing:-0.586px;color:#0a0a0a;">0.35</div>
<div class="t" style="left:19.5px;top:127px;font-size:24px;line-height:30px;letter-spacing:-0.769px;color:#0a0a0a;">Bag</div>
<div class="t" style="left:264.5px;top:127px;font-size:24px;line-height:30px;letter-spacing:0.024px;color:#0a0a0a;">71-439</div>
<div class="t" style="left:442.5px;top:127px;font-size:24px;line-height:30px;letter-spacing:-0.451px;color:#0a0a0a;">BAG 71-439</div>
<div class="t" style="left:802.5px;top:127px;font-size:24px;line-height:30px;letter-spacing:0.287px;color:#0a0a0a;">118</div>
<div class="t" style="left:928.5px;top:127px;font-size:24px;line-height:30px;letter-spacing:-0.530px;color:#0a0a0a;">0.295</div>
<div class="t" style="left:19.5px;top:165px;font-size:24px;line-height:30px;letter-spacing:-0.729px;color:#0a0a0a;">Box</div>
<div class="t" style="left:264.5px;top:165px;font-size:24px;line-height:30px;letter-spacing:0.091px;color:#0a0a0a;">8-544</div>
<div class="t" style="left:442.5px;top:165px;font-size:24px;line-height:30px;letter-spacing:-0.436px;color:#0a0a0a;">BOX 8-544</div>
<div class="t" style="left:802.5px;top:165px;font-size:24px;line-height:30px;letter-spacing:-0.307px;color:#0a0a0a;">158</div>
<div class="t" style="left:928.5px;top:165px;font-size:24px;line-height:30px;letter-spacing:-0.493px;color:#0a0a0a;">0.1975</div>
<div class="t" style="left:19.5px;top:203px;font-size:24px;line-height:30px;letter-spacing:-0.729px;color:#0a0a0a;">Box</div>
<div class="t" style="left:264.5px;top:203px;font-size:24px;line-height:30px;letter-spacing:0.024px;color:#0a0a0a;">38-606</div>
<div class="t" style="left:442.5px;top:203px;font-size:24px;line-height:30px;letter-spacing:-0.423px;color:#0a0a0a;">BOX 38-606</div>
<div class="t" style="left:802.5px;top:203px;font-size:24px;line-height:30px;letter-spacing:-0.307px;color:#0a0a0a;">70</div>
<div class="t" style="left:928.5px;top:203px;font-size:24px;line-height:30px;letter-spacing:-0.530px;color:#0a0a0a;">0.175</div>
<div class="t" style="left:19.5px;top:241px;font-size:24px;line-height:30px;letter-spacing:-0.729px;color:#0a0a0a;">Box</div>
<div class="t" style="left:264.5px;top:241px;font-size:24px;line-height:30px;letter-spacing:0.024px;color:#0a0a0a;">55-547</div>
<div class="t" style="left:442.5px;top:241px;font-size:24px;line-height:30px;letter-spacing:-0.423px;color:#0a0a0a;">BOX 55-547</div>
<div class="t" style="left:802.5px;top:241px;font-size:24px;line-height:30px;letter-spacing:-0.307px;color:#0a0a0a;">183</div>
<div class="t" style="left:928.5px;top:241px;font-size:24px;line-height:30px;letter-spacing:-0.493px;color:#0a0a0a;">0.2288</div>
<div class="t" style="left:19.5px;top:279px;font-size:24px;line-height:30px;letter-spacing:-0.729px;color:#0a0a0a;">Box</div>
<div class="t" style="left:264.5px;top:279px;font-size:24px;line-height:30px;letter-spacing:0.024px;color:#0a0a0a;">14-636</div>
<div class="t" style="left:442.5px;top:279px;font-size:24px;line-height:30px;letter-spacing:-0.423px;color:#0a0a0a;">BOX 14-636</div>
<div class="t" style="left:802.5px;top:279px;font-size:24px;line-height:30px;letter-spacing:-0.307px;color:#0a0a0a;">168</div>
<div class="t" style="left:928.5px;top:279px;font-size:24px;line-height:30px;letter-spacing:-0.586px;color:#0a0a0a;">0.14</div>
<div class="t" style="left:19.5px;top:314px;font-size:24px;line-height:30px;letter-spacing:-0.672px;color:#0a0a0a;">Labels</div>
<div class="t" style="left:264.5px;top:314px;font-size:24px;line-height:30px;letter-spacing:0.091px;color:#0a0a0a;">1-462</div>
<div class="t" style="left:442.5px;top:314px;font-size:24px;line-height:30px;letter-spacing:-1.083px;color:#0a0a0a;">LABELS 1-462</div>
<div class="t" style="left:802.5px;top:314px;font-size:24px;line-height:30px;letter-spacing:-0.307px;color:#0a0a0a;">168</div>
<div class="t" style="left:928.5px;top:314px;font-size:24px;line-height:30px;letter-spacing:-0.493px;color:#0a0a0a;">0.0035</div>
<div class="t" style="left:19.5px;top:352px;font-size:24px;line-height:30px;letter-spacing:-0.148px;color:#0a0a0a;">Miscellaneous</div>
<div class="t" style="left:264.5px;top:352px;font-size:24px;line-height:30px;letter-spacing:0.024px;color:#0a0a0a;">70-391</div>
<div class="t" style="left:442.5px;top:352px;font-size:24px;line-height:30px;letter-spacing:-0.965px;color:#0a0a0a;">MISCELLANEOUS 70-391</div>
<div class="t" style="left:802.5px;top:352px;font-size:24px;line-height:30px;letter-spacing:-0.307px;color:#0a0a0a;">228</div>
<div class="t" style="left:928.5px;top:352px;font-size:24px;line-height:30px;letter-spacing:-0.530px;color:#0a0a0a;">0.456</div>
<div class="t" style="left:19.5px;top:390px;font-size:24px;line-height:30px;letter-spacing:-0.543px;color:#0a0a0a;">Sheet</div>
<div class="t" style="left:264.5px;top:390px;font-size:24px;line-height:30px;letter-spacing:0.024px;color:#0a0a0a;">52-270</div>
<div class="t" style="left:442.5px;top:390px;font-size:24px;line-height:30px;letter-spacing:-1.026px;color:#0a0a0a;">SHEET 52-270</div>
<div class="t" style="left:802.5px;top:390px;font-size:24px;line-height:30px;letter-spacing:-0.307px;color:#0a0a0a;">168</div>
<div class="t" style="left:928.5px;top:390px;font-size:24px;line-height:30px;letter-spacing:-0.530px;color:#0a0a0a;">0.056</div>
</div>
<div class="t" style="left:443px;top:1270px;font-size:24px;line-height:30px;letter-spacing:-0.439px;font-weight:700;">COV Bag Stamping</div>
<div style="left:433px;top:1314px;width:2458px;height:47px;overflow:hidden">
<div style="left:0px;top:0px;width:2458px;height:47px;border:2px solid #7292b7;box-sizing:border-box;background:#f0f0f0"></div>
<div style="left:140px;top:2px;width:1px;height:40px;background:#fcfcfc"></div>
<div style="left:141px;top:2px;width:1px;height:40px;background:#e3e3e3"></div>
<div style="left:222px;top:2px;width:1px;height:40px;background:#fcfcfc"></div>
<div style="left:223px;top:2px;width:1px;height:40px;background:#e3e3e3"></div>
<div style="left:314px;top:2px;width:1px;height:40px;background:#fcfcfc"></div>
<div style="left:315px;top:2px;width:1px;height:40px;background:#e3e3e3"></div>
<div style="left:491px;top:2px;width:1px;height:40px;background:#fcfcfc"></div>
<div style="left:492px;top:2px;width:1px;height:40px;background:#e3e3e3"></div>
<div style="left:648px;top:2px;width:1px;height:40px;background:#fcfcfc"></div>
<div style="left:649px;top:2px;width:1px;height:40px;background:#e3e3e3"></div>
<div style="left:774px;top:2px;width:1px;height:40px;background:#fcfcfc"></div>
<div style="left:775px;top:2px;width:1px;height:40px;background:#e3e3e3"></div>
<div style="left:985px;top:2px;width:1px;height:40px;background:#fcfcfc"></div>
<div style="left:986px;top:2px;width:1px;height:40px;background:#e3e3e3"></div>
<div style="left:2px;top:42px;width:2454px;height:3px;background:linear-gradient(#c4c4c4,#6e6e6e)"></div>
</div>
<div style="left:433px;top:1314px;width:2456px;height:47px;overflow:hidden">
<div class="t" style="left:6.300000000000011px;top:11px;font-size:24px;line-height:30px;letter-spacing:-0.109px;color:#111;">Customer</div>
<div class="t" style="left:145.29999999999995px;top:11px;font-size:24px;line-height:30px;letter-spacing:-0.648px;color:#111;">PO#</div>
<div class="t" style="left:227.29999999999995px;top:11px;font-size:24px;line-height:30px;letter-spacing:-0.332px;color:#111;">Code</div>
<div class="t" style="left:319.29999999999995px;top:11px;font-size:24px;line-height:30px;letter-spacing:0.350px;color:#111;">Item Number</div>
<div class="t" style="left:496.29999999999995px;top:11px;font-size:24px;line-height:30px;letter-spacing:0.128px;color:#111;">Description</div>
<div class="t" style="left:653.3px;top:11px;font-size:24px;line-height:30px;letter-spacing:0.302px;color:#111;">Quantity</div>
<div class="t" style="left:779.3px;top:11px;font-size:24px;line-height:30px;letter-spacing:-0.317px;color:#111;">Best Before Date</div>
</div>
<div style="left:425px;top:1257px;width:2470px;height:108px;border:6px solid #e84226;box-sizing:border-box"></div>
<div class="t" style="left:443px;top:1374px;font-size:24px;line-height:30px;letter-spacing:-0.607px;font-weight:700;">Chinese Labeling</div>
<div style="left:433px;top:1418px;width:2458px;height:121px;overflow:hidden">
<div style="left:0px;top:0px;width:2458px;height:121px;border:2px solid #7292b7;box-sizing:border-box;background:#f0f0f0"></div>
<div style="left:13px;top:2px;width:1px;height:40px;background:#fbfbfb"></div>
<div style="left:14px;top:2px;width:1px;height:40px;background:#e6e6e6"></div>
<div style="left:105px;top:2px;width:1px;height:40px;background:#fcfcfc"></div>
<div style="left:106px;top:2px;width:1px;height:40px;background:#e3e3e3"></div>
<div style="left:314px;top:2px;width:1px;height:40px;background:#fcfcfc"></div>
<div style="left:315px;top:2px;width:1px;height:40px;background:#e3e3e3"></div>
<div style="left:529px;top:2px;width:1px;height:40px;background:#fcfcfc"></div>
<div style="left:530px;top:2px;width:1px;height:40px;background:#e3e3e3"></div>
<div style="left:10px;top:42px;width:2446px;height:3px;background:linear-gradient(#c4c4c4,#6e6e6e)"></div>
<div style="left:13px;top:45px;width:2443px;height:36px;background:#fff"></div>
<div style="left:13px;top:81px;width:2443px;height:2px;background:#000"></div>
<div style="left:2px;top:81px;width:8px;height:1px;background:#e0e0e0"></div>
<div style="left:13px;top:83px;width:2443px;height:36px;background:#b7d9e5"></div>
<div style="left:2383px;top:83px;width:73px;height:36px;background:#b9d5ea"></div>
<div style="left:13px;top:119px;width:2443px;height:2px;background:#000"></div>
<div style="left:2px;top:119px;width:8px;height:1px;background:#e0e0e0"></div>
<div style="left:10px;top:44px;width:3px;height:77px;background:linear-gradient(90deg,#9a9a9a,#5a5a5a)"></div>
<div style="left:104px;top:45px;width:2px;height:76px;background:#000"></div>
<div style="left:313px;top:45px;width:2px;height:76px;background:#000"></div>
<div style="left:528px;top:45px;width:2px;height:76px;background:#000"></div>
</div>
<div style="left:433px;top:1418px;width:2456px;height:121px;overflow:hidden">
<div class="t" style="left:19.5px;top:11px;font-size:24px;line-height:30px;letter-spacing:-0.332px;color:#111;">Code</div>
<div class="t" style="left:112px;top:11px;font-size:24px;line-height:30px;letter-spacing:0.323px;color:#111;">Quantity Interior</div>
<div class="t" style="left:321px;top:11px;font-size:24px;line-height:30px;letter-spacing:0.043px;color:#111;">Quantity Exterior</div>
<div class="t" style="left:19.5px;top:50px;font-size:24px;line-height:30px;letter-spacing:-0.307px;color:#0a0a0a;">27427</div>
<div class="t" style="left:111.5px;top:50px;font-size:24px;line-height:30px;letter-spacing:0.287px;color:#0a0a0a;">118</div>
<div class="t" style="left:320.5px;top:50px;font-size:24px;line-height:30px;letter-spacing:0.287px;color:#0a0a0a;">118</div>
<div class="t" style="left:19.5px;top:88px;font-size:24px;line-height:30px;letter-spacing:-0.307px;color:#0a0a0a;">27638</div>
<div class="t" style="left:111.5px;top:88px;font-size:24px;line-height:30px;letter-spacing:-0.307px;color:#0a0a0a;">183</div>
<div class="t" style="left:320.5px;top:88px;font-size:24px;line-height:30px;letter-spacing:-0.307px;color:#0a0a0a;">183</div>
</div>
<div class="t" style="left:443px;top:1554px;font-size:24px;line-height:30px;letter-spacing:-0.297px;font-weight:700;">#2 Packaging Instructions</div>
<div style="left:433px;top:1598px;width:2458px;height:35px;overflow:hidden">
<div style="left:0px;top:0px;width:2458px;height:48px;border:2px solid #7292b7;box-sizing:border-box;background:#f0f0f0"></div>
<div style="left:13px;top:2px;width:1px;height:41px;background:#fbfbfb"></div>
<div style="left:14px;top:2px;width:1px;height:41px;background:#e6e6e6"></div>
<div style="left:177px;top:2px;width:1px;height:41px;background:#fcfcfc"></div>
<div style="left:178px;top:2px;width:1px;height:41px;background:#e3e3e3"></div>
<div style="left:354px;top:2px;width:1px;height:41px;background:#fcfcfc"></div>
<div style="left:355px;top:2px;width:1px;height:41px;background:#e3e3e3"></div>
<div style="left:615px;top:2px;width:1px;height:41px;background:#fcfcfc"></div>
<div style="left:616px;top:2px;width:1px;height:41px;background:#e3e3e3"></div>
<div style="left:10px;top:43px;width:2446px;height:3px;background:linear-gradient(#c4c4c4,#6e6e6e)"></div>
</div>
<div style="left:433px;top:1598px;width:2456px;height:35px;overflow:hidden">
<div class="t" style="left:19.5px;top:11px;font-size:24px;line-height:30px;letter-spacing:-0.206px;color:#111;">Type</div>
<div class="t" style="left:182.5px;top:11px;font-size:24px;line-height:30px;letter-spacing:0.350px;color:#111;">Item Number</div>
<div class="t" style="left:359.5px;top:11px;font-size:24px;line-height:30px;letter-spacing:0.128px;color:#111;">Description</div>
<div class="t" style="left:620.5px;top:11px;font-size:24px;line-height:30px;letter-spacing:0.302px;color:#111;">Quantity</div>
</div>
<div style="left:2892px;top:264px;width:33.5px;height:1372px;background:#f0f0f0"></div>
<div style="left:2892px;top:369px;width:33.5px;height:499px;background:#cdcdcd"></div>
<svg style="left:2899.5px;top:277px" width="18" height="12" viewBox="0 0 18 12" fill="none" stroke="#929292" stroke-width="2.4"><path d="M2 10 L9 3 L16 10"/></svg>
<svg style="left:2899.5px;top:1612px" width="18" height="12" viewBox="0 0 18 12" fill="none" stroke="#929292" stroke-width="2.4"><path d="M2 2 L9 9 L16 2"/></svg>
<div style="left:0px;top:1648px;width:2940px;height:68px;background:#2e343b"></div>
<div style="left:274px;top:1648px;width:3px;height:68px;background:#dcdcdc"></div>
<div style="left:574px;top:1648px;width:3px;height:68px;background:#dcdcdc"></div>
<svg style="left:28px;top:1668px" width="28" height="28" viewBox="0 0 28 28"><circle cx="14" cy="14" r="11.5" fill="#3a8a2a" stroke="#9aa89a" stroke-width="1.5"/></svg>
<div class="t" style="left:64px;top:1668px;font-size:25px;line-height:31px;letter-spacing:-0.566px;color:#fff;">Connection status</div>
<svg style="left:303px;top:1664px" width="34" height="36" viewBox="0 0 34 36" fill="#fff"><circle cx="17" cy="10" r="8.3"/><path d="M0.5 35 V30 C0.5 23 9 20.5 17 20.5 C25 20.5 33.5 23 33.5 30 V35 Z"/></svg>
<div class="t" style="left:344px;top:1668px;font-size:25px;line-height:31px;letter-spacing:-0.397px;color:#fff;">APP2\Administrator</div>
<svg style="left:1861px;top:1668px" width="30" height="30" viewBox="0 0 30 30" fill="none"><circle cx="15" cy="15" r="12.2" stroke="#f0f0f0" stroke-width="2.4"/><rect x="13.6" y="12.5" width="2.8" height="9.5" fill="#f0f0f0"/><circle cx="15" cy="8.6" r="1.8" fill="#f0f0f0"/></svg>
<div class="t" style="left:1921px;top:1668px;font-size:25px;line-height:31px;letter-spacing:-0.504px;font-weight:700;color:#fff;">Production Explorer: Data rel...</div>
<div class="t" style="left:2773px;top:1668px;font-size:25px;line-height:31px;letter-spacing:-0.742px;color:#fff;">Show Details</div>
</body></html>
